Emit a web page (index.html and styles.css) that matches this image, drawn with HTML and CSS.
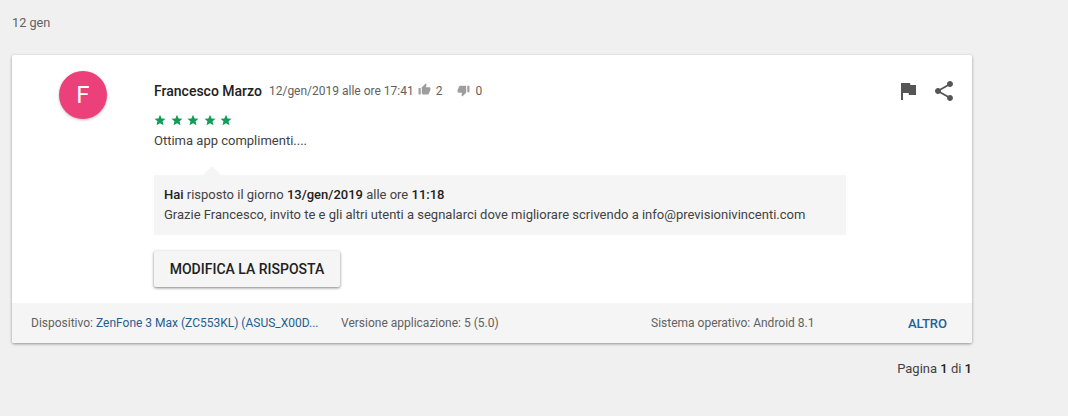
FILE: index.html
```html
<!DOCTYPE html>
<html lang="it">
<head>
<meta charset="utf-8">
<title>Recensioni</title>
<link rel="stylesheet" href="styles.css">
</head>
<body>
<div class="date">12 gen</div>
<section class="card">
  <div class="card-body">
    <div class="avatar-col"><div class="avatar">F</div></div>
    <div class="content">
      <div class="head">
        <strong class="name">Francesco Marzo</strong>
        <span class="stamp">12/gen/2019 alle ore 17:41</span>
        <svg class="thumb up" viewBox="0 0 24 24"><path d="M1 21h4V9H1v12zm22-11c0-1.100-.9-2-2-2h-6.310l.95-4.570.03-.32c0-.41-.17-.79-.44-1.060L14.170 1 7.590 7.590C7.220 7.950 7 8.450 7 9v10c0 1.100.9 2 2 2h9c.83 0 1.540-.5 1.840-1.220l3.020-7.050c.09-.23.140-.47.140-.73v-2z"/></svg>
        <span class="count first">2</span>
        <svg class="thumb down" viewBox="0 0 24 24"><path d="M15 3H6c-.83 0-1.540.5-1.840 1.220l-3.020 7.050c-.09.23-.14.47-.14.730v2c0 1.100.9 2 2 2h6.310l-.95 4.570-.03.32c0 .41.17.79.44 1.060L9.830 23l6.590-6.590c.36-.36.58-.86.58-1.410V5c0-1.100-.9-2-2-2zm4 0v12h4V3h-4z"/></svg>
        <span class="count">0</span>
      </div>
      <div class="stars">
        <svg viewBox="0 0 24 24"><path d="M12 1.500l3.200 7.300 7.800.7-5.900 5.200 1.800 7.800L12 18.400l-6.900 4.100 1.800-7.800L1 9.500l7.800-.7z"/></svg>
        <svg viewBox="0 0 24 24"><path d="M12 1.500l3.200 7.300 7.800.7-5.900 5.200 1.800 7.800L12 18.400l-6.900 4.100 1.800-7.800L1 9.500l7.800-.7z"/></svg>
        <svg viewBox="0 0 24 24"><path d="M12 1.500l3.200 7.300 7.800.7-5.900 5.200 1.800 7.800L12 18.400l-6.900 4.100 1.800-7.800L1 9.500l7.800-.7z"/></svg>
        <svg viewBox="0 0 24 24"><path d="M12 1.500l3.200 7.300 7.800.7-5.900 5.200 1.800 7.800L12 18.400l-6.900 4.100 1.800-7.800L1 9.500l7.800-.7z"/></svg>
        <svg viewBox="0 0 24 24"><path d="M12 1.500l3.200 7.300 7.800.7-5.900 5.200 1.800 7.800L12 18.400l-6.900 4.100 1.800-7.800L1 9.500l7.800-.7z"/></svg>
      </div>
      <p class="review">Ottima app complimenti....</p>
      <div class="reply">
        <div><b>Hai</b> risposto il giorno <b>13/gen/2019</b> alle ore <b>11:18</b></div>
        <div>Grazie Francesco, invito te e gli altri utenti a segnalarci dove migliorare scrivendo a info@previsionivincenti.com</div>
      </div>
      <button class="edit" type="button">MODIFICA LA RISPOSTA</button>
    </div>
    <div class="actions">
      <svg class="flag" viewBox="0 0 24 24"><path d="M14.400 6L14 4H5v17h2v-7h5.600l.4 2h7V6z"/></svg>
      <svg class="share" viewBox="0 0 24 24"><path d="M18 16.080c-.76 0-1.440.3-1.960.77L8.910 12.700c.05-.23.09-.46.09-.7s-.04-.47-.09-.7l7.050-4.110c.54.5 1.250.81 2.040.81 1.660 0 3-1.340 3-3s-1.340-3-3-3-3 1.340-3 3c0 .24.04.47.09.7L8.040 9.810C7.500 9.310 6.790 9 6 9c-1.660 0-3 1.340-3 3s1.340 3 3 3c.79 0 1.500-.31 2.040-.81l7.120 4.160c-.05.21-.08.43-.08.650 0 1.610 1.310 2.920 2.920 2.920s2.920-1.310 2.920-2.920-1.310-2.920-2.920-2.920z"/></svg>
    </div>
  </div>
  <footer class="meta">
    <div class="meta-device">Dispositivo: <a class="link">ZenFone 3 Max (ZC553KL) (ASUS_X00D...</a></div>
    <div class="meta-version">Versione applicazione: 5 (5.0)</div>
    <div class="meta-os">Sistema operativo: Android 8.1</div>
    <a class="more">ALTRO</a>
  </footer>
</section>
<div class="pager">Pagina <b>1</b> di <b>1</b></div>
</body>
</html>
```
FILE: styles.css
```css
* { box-sizing: border-box; }
html, body { margin: 0; height: 100%; }
body {
  background: #f0f0f0;
  color: #555;
  font: 13px/16px Roboto, "Liberation Sans", sans-serif;
  padding: 15px 96px 0 12px;
  overflow: hidden;
}
.date { height: 40px; color: #616161; font-size: 12.700px; }
.card {
  background: #fff;
  height: 288px;
  border-radius: 2px;
  box-shadow: 0 1px 3px rgba(0,0,0,.4);
  display: flex;
  flex-direction: column;
}
.card-body { flex: 1; display: flex; padding: 16px 16px 0 0; }
.avatar-col { width: 142px; flex: none; padding-left: 47px; }
.avatar {
  width: 48px; height: 48px; border-radius: 50%;
  background: #ec407a; color: #fff;
  font-size: 24px; line-height: 48px; text-align: center;
  box-shadow: 0 1px 3px rgba(0,0,0,.25);
}
.content { width: 692px; flex: none; }
.head { display: flex; align-items: center; height: 20px; margin-top: 10px; white-space: nowrap; }
.name { color: #212121; font-weight: 500; font-size: 14px; margin-right: 7px; }
.stamp { font-size: 12px; color: #616161; margin-right: 4px; }
.thumb { width: 13px; height: 13px; fill: #9e9e9e; flex: none; }
.thumb.up { margin-top: -4px; }
.thumb.down { margin-top: -1px; margin-left: 15px; }
.count { font-size: 12px; color: #616161; margin-left: 5px; }
.stars { display: flex; gap: 4.500px; height: 14px; margin-top: 13px; }
.stars svg { width: 12px; height: 12px; fill: #0f9d58; }
.review { margin: 3px 0 0; height: 20px; line-height: 20px; color: #424242; }
.reply {
  position: relative;
  margin-top: 24px;
  height: 60px;
  padding: 10px;
  background: #f5f5f5;
  line-height: 20px;
  color: #424242;
}
.reply::before {
  content: "";
  position: absolute;
  left: 49px; top: -9px;
  border-left: 9px solid transparent;
  border-right: 9px solid transparent;
  border-bottom: 9px solid #f5f5f5;
}
.reply b { color: #212121; font-weight: 500; }
.edit {
  display: block;
  margin-top: 16px;
  width: 186px; height: 36px;
  border: 0; padding: 0; border-radius: 2px;
  background: #f5f5f5;
  color: #212121;
  font: 500 14px Roboto, "Liberation Sans", sans-serif;
  box-shadow: 0 1px 3px rgba(0,0,0,.5);
}
.actions { flex: 1; display: flex; justify-content: flex-end; gap: 12px; padding-top: 8px; }
.actions svg { width: 24px; height: 24px; fill: #555; flex: none; }
.meta {
  height: 40px; flex: none;
  background: #f5f5f5;
  display: flex; align-items: center;
  padding: 0 25px 0 19px;
  font-size: 12px;
  color: #616161;
  white-space: nowrap;
  border-radius: 0 0 2px 2px;
}
.meta-device { width: 310px; }
.meta-version { width: 310px; }
.meta-os { flex: 1; }
.link { color: #245e8f; }
.more { color: #1f5f99; font-weight: 500; font-size: 13px; margin-top: 1px; }
.pager { width: 960px; text-align: right; margin-top: 18px; color: #424242; font-size: 13px; }
.pager b { color: #212121; font-weight: 500; }
```
